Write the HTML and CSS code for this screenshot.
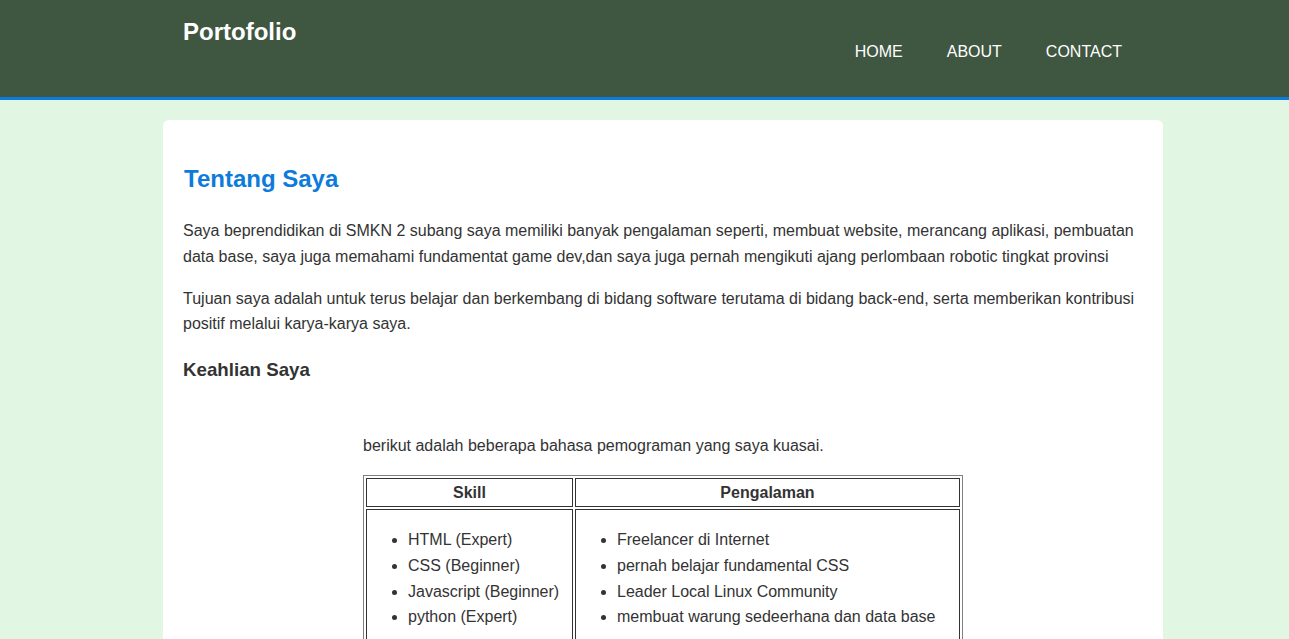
FILE: index.html
```html
<!DOCTYPE html>
<html lang="id">
<head>
<meta charset="utf-8">
<title>Portofolio</title>
<link rel="stylesheet" href="styles.css">
</head>
<body>
<header class="site-header">
  <div class="header-inner">
    <div class="brand">Portofolio</div>
    <nav class="nav">
      <a href="#">HOME</a>
      <a href="#">ABOUT</a>
      <a href="#">CONTACT</a>
    </nav>
  </div>
</header>
<main class="card">
  <h2 class="title">Tentang Saya</h2>
  <p>Saya beprendidikan di SMKN 2 subang saya memiliki banyak pengalaman seperti, membuat website, merancang aplikasi, pembuatan data base, saya juga memahami fundamentat game dev,dan saya juga pernah mengikuti ajang perlombaan robotic tingkat provinsi</p>
  <p>Tujuan saya adalah untuk terus belajar dan berkembang di bidang software terutama di bidang back-end, serta memberikan kontribusi positif melalui karya-karya saya.</p>
  <h3 class="subtitle">Keahlian Saya</h3>
  <div class="skills">
    <p>berikut adalah beberapa bahasa pemograman yang saya kuasai.</p>
    <table class="skill-table">
      <tr>
        <th class="col-skill">Skill</th>
        <th>Pengalaman</th>
      </tr>
      <tr>
        <td>
          <ul>
            <li>HTML (Expert)</li>
            <li>CSS (Beginner)</li>
            <li>Javascript (Beginner)</li>
            <li>python (Expert)</li>
          </ul>
        </td>
        <td>
          <ul>
            <li>Freelancer di Internet</li>
            <li>pernah belajar fundamental CSS</li>
            <li>Leader Local Linux Community</li>
            <li>membuat warung sedeerhana dan data base</li>
          </ul>
        </td>
      </tr>
    </table>
  </div>
</main>
</body>
</html>
```
FILE: styles.css
```css
* { box-sizing: border-box; }
html, body {
  margin: 0;
  padding: 0;
}
body {
  background: #e1f6e3;
  font-family: "Liberation Sans", Arial, sans-serif;
  color: #333;
  font-size: 16px;
  line-height: 1.6;
}
.site-header {
  background: #3f5641;
  border-bottom: 3px solid #0c7bdc;
  height: 100px;
  padding-left: 37px;
}
.header-inner {
  width: 1000px;
  margin: 0 auto;
  padding: 0 20px;
  display: flex;
  justify-content: space-between;
  align-items: flex-start;
}
.brand {
  color: #fff;
  font-weight: bold;
  font-size: 24px;
  line-height: 30px;
  margin-top: 17px;
}
.nav {
  display: flex;
  margin-top: 42px;
  margin-right: -1px;
}
.nav a {
  color: #fff;
  text-decoration: none;
  font-size: 16px;
  line-height: 20px;
  padding: 0 22px;
}
.card {
  display: block;
  width: 1000px;
  margin: 20px 126px 0 auto;
  background: #fff;
  border-radius: 6px;
  padding: 20px;
  min-height: 600px;
}
.title {
  color: #0c7bdc;
  font-size: 24px;
  margin: 20px 0 20px 1px;
}
.card p {
  margin: 16px 0;
}
.subtitle {
  font-size: 18.72px;
  margin: 18.72px 0;
}
.skills {
  width: 600px;
  margin: 0 auto;
  padding-top: 13px;
}
.skill-table {
  width: 100%;
  border: 1px solid #808080;
  border-spacing: 2px;
}
.skill-table th,
.skill-table td {
  border: 1px solid #333;
  padding: 1px;
  vertical-align: middle;
}
.skill-table .col-skill {
  width: 207px;
}
.skill-table ul {
  margin: 16px 0;
  padding-left: 40px;
}
```
